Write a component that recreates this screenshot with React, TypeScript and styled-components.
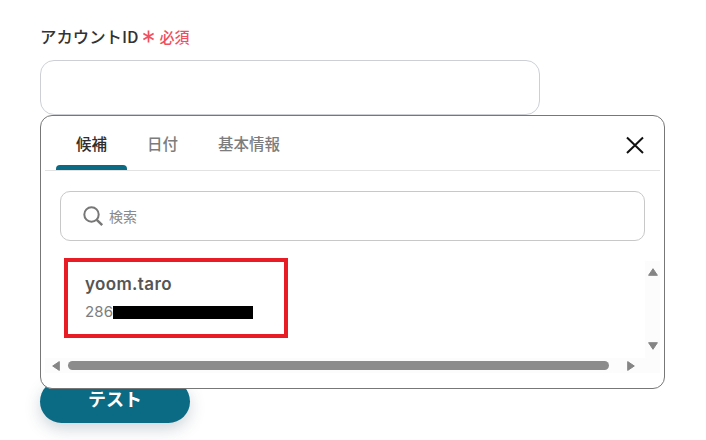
import styled, { createGlobalStyle } from "styled-components";

const GlobalStyle = createGlobalStyle`
  html, body {
    margin: 0;
    padding: 0;
    background: #fff;
    font-family: "Noto Sans CJK JP", "Noto Sans", sans-serif;
  }
`;

const Page = styled.div`
  position: relative;
  width: 706px;
  height: 440px;
  overflow: hidden;
  padding: 25px 0 0 40px;
  box-sizing: border-box;
`;

const LabelRow = styled.div`
  display: flex;
  align-items: center;
  height: 22px;
  gap: 4px;
  margin-bottom: 13px;
`;

const Label = styled.span`
  font-size: 16.4px;
  font-weight: 500;
  color: #333;
`;

const Required = styled.span`
  display: flex;
  align-items: center;
  gap: 4px;
  font-size: 15px;
  font-weight: 500;
  color: #f04f5f;
`;

const Field = styled.div`
  width: 500px;
  height: 55px;
  box-sizing: border-box;
  border: 1px solid #ccd0d6;
  border-radius: 14px;
  margin-bottom: 265px;
`;

const TestButton = styled.button`
  display: block;
  width: 150px;
  height: 43px;
  border: none;
  border-radius: 22px;
  background: #0b6a84;
  color: #fff;
  font-family: inherit;
  font-size: 18px;
  font-weight: 700;
  padding: 0 0 7px;
  box-shadow: 0 6px 16px rgba(40, 70, 90, 0.22);
`;

const Popup = styled.div`
  position: absolute;
  left: 40px;
  top: 115px;
  width: 625px;
  height: 274px;
  box-sizing: border-box;
  padding: 0 4px;
  background: #fff;
  border: 1px solid #777;
  border-radius: 12px;
`;

const TabBar = styled.div`
  position: relative;
  display: flex;
  height: 55px;
  box-sizing: border-box;
  padding-left: 11px;
  border-bottom: 1px solid #e2e2e2;
`;

const Tab = styled.div<{ $active?: boolean; $width: number }>`
  position: relative;
  width: ${({ $width }) => $width}px;
  text-align: center;
  padding-top: 16px;
  font-size: 15.5px;
  line-height: 22px;
  font-weight: 500;
  color: ${({ $active }) => ($active ? "#2e2e2e" : "#7c7c7c")};

  &::after {
    content: "";
    display: ${({ $active }) => ($active ? "block" : "none")};
    position: absolute;
    left: 0;
    right: 0;
    bottom: 0;
    height: 5px;
    border-radius: 4px 4px 0 0;
    background: #0b6a84;
  }
`;

const CloseButton = styled.button`
  position: absolute;
  right: 15px;
  top: 19px;
  display: flex;
  padding: 0;
  border: none;
  background: none;
`;

const SearchBox = styled.div`
  display: flex;
  align-items: center;
  gap: 5px;
  height: 50px;
  box-sizing: border-box;
  margin: 20px 15px 17px;
  padding: 0 0 0 21px;
  border: 1px solid #c8c8c8;
  border-radius: 10px;
  font-size: 14px;
  color: #8a8a8a;
`;

const Results = styled.div`
  display: grid;
  grid-template-columns: 600px 15px;
  grid-template-rows: 100px 15px;
`;

const ListArea = styled.div`
  padding: 0 0 0 19px;
`;

const Item = styled.div`
  width: 224px;
  height: 80px;
  box-sizing: border-box;
  border: 4px solid #e81c24;
  padding: 10px 17px 0;
`;

const ItemName = styled.div`
  font-family: "Inter", "Noto Sans", sans-serif;
  font-size: 17px;
  line-height: 24px;
  font-weight: 600;
  letter-spacing: 0.35px;
  color: #555;
`;

const ItemId = styled.div`
  display: flex;
  align-items: center;
  margin-top: 6px;
  font-family: "Inter", "Noto Sans", sans-serif;
  font-size: 15px;
  line-height: 20px;
  letter-spacing: 0.2px;
  color: #7d7d7d;
`;

const Redaction = styled.span`
  width: 140px;
  height: 13px;
  background: #000;
`;

const VerticalRail = styled.div`
  display: flex;
  flex-direction: column;
  justify-content: space-between;
  align-items: center;
  margin-top: 3px;
  padding: 7px 0 8px;
  box-sizing: border-box;
  background: #fcfcfc;
`;

const HorizontalRail = styled.div`
  grid-column: 1 / 3;
  display: flex;
  align-items: center;
  background: #fcfcfc;
  padding: 0 8px 0 7px;
`;

const Thumb = styled.div`
  width: 541px;
  height: 9px;
  margin: 0 18px 0 8px;
  border-radius: 5px;
  background: #8c8c8c;
`;

const Arrow = ({ d, w, h }: { d: string; w: number; h: number }) => (
  <svg width={w} height={h} viewBox={`0 0 ${w} ${h}`}>
    <path d={d} fill="#858585" stroke="#858585" strokeLinejoin="round" />
  </svg>
);

export default function App() {
  return (
    <Page>
      <GlobalStyle />
      <LabelRow>
        <Label>アカウントID</Label>
        <Required>
          <svg width="13" height="13" viewBox="0 0 13 13">
            <path
              d="M6.5 .6v11.8M1.4 3.4l10.2 6.2M11.6 3.4L1.4 9.6"
              stroke="#f04f5f"
              strokeWidth="1.7"
              fill="none"
            />
          </svg>
          必須
        </Required>
      </LabelRow>
      <Field />
      <TestButton>テスト</TestButton>
      <Popup>
        <TabBar>
          <Tab $active $width={71}>候補</Tab>
          <Tab $width={71}>日付</Tab>
          <Tab $width={102}>基本情報</Tab>
          <CloseButton>
            <svg width="20" height="20" viewBox="0 0 20 20">
              <path d="M2 2.5l16 15.5M18 2.5L2 18" stroke="#111" strokeWidth="2" fill="none" />
            </svg>
          </CloseButton>
        </TabBar>
        <SearchBox>
          <svg width="22" height="22" viewBox="0 0 22 22">
            <circle cx="9.5" cy="9.5" r="7.2" stroke="#777" strokeWidth="2" fill="none" />
            <path d="M14.8 14.8l5.4 5.4" stroke="#777" strokeWidth="2.4" fill="none" />
          </svg>
          検索
        </SearchBox>
        <Results>
          <ListArea>
            <Item>
              <ItemName>yoom.taro</ItemName>
              <ItemId>
                286
                <Redaction />
              </ItemId>
            </Item>
          </ListArea>
          <VerticalRail>
            <Arrow w={10} h={8} d="M5 .7L9.4 7.3H.6Z" />
            <Arrow w={10} h={8} d="M5 7.3L9.4 .7H.6Z" />
          </VerticalRail>
          <HorizontalRail>
            <Arrow w={8} h={10} d="M.7 5L7.3 .6V9.4Z" />
            <Thumb />
            <Arrow w={8} h={10} d="M7.3 5L.7 .6V9.4Z" />
          </HorizontalRail>
        </Results>
      </Popup>
    </Page>
  );
}
